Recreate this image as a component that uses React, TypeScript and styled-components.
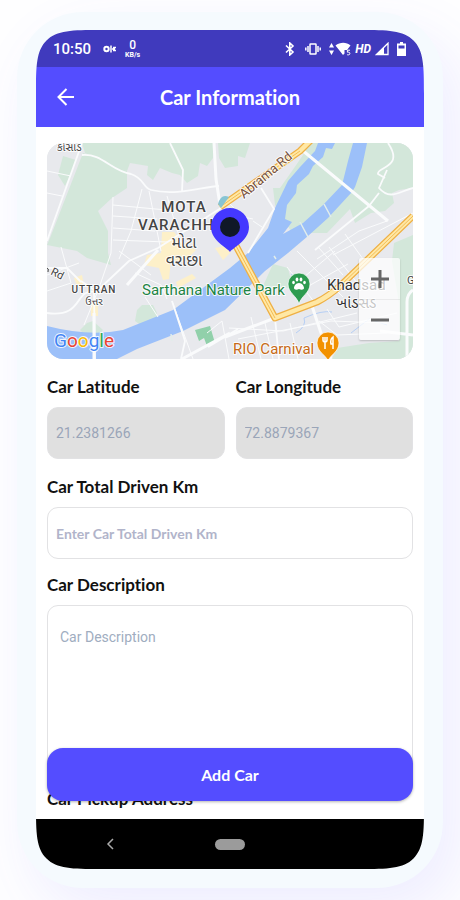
import React from "react";
import styled, { createGlobalStyle } from "styled-components";

const GlobalStyle = createGlobalStyle`
  *, *::before, *::after { box-sizing: border-box; }
  body {
    margin: 0;
    background: #fefeff;
    font-family: Roboto, "Noto Sans", sans-serif;
    font-variant-ligatures: none;
  }
  button, input, textarea { font: inherit; font-variant-ligatures: none; }
`;

const Page = styled.div`
  height: 100vh;
  min-height: 600px;
  padding: 12px 17px;
  display: flex;
  overflow: hidden;
`;

const Bezel = styled.div`
  flex: 1;
  min-width: 0;
  display: flex;
  padding: 18px 19px 19px;
  background: #f5fafe;
  border-radius: 66px;
  box-shadow: 16px 24px 60px rgba(99, 91, 255, 0.1);
`;

const Screen = styled.div`
  flex: 1;
  min-width: 0;
  display: flex;
  flex-direction: column;
  background: #fff;
  overflow: hidden;
  border-radius: 44px;
  @supports (corner-shape: squircle) {
    border-radius: 66px;
    corner-shape: squircle;
  }
`;

const StatusBar = styled.div`
  flex: none;
  height: 37px;
  padding: 0 18px 0 17px;
  display: flex;
  align-items: center;
  justify-content: space-between;
  background: #403abd;
  color: #fff;
`;

const StatusGroup = styled.div<{ $gap: number }>`
  display: flex;
  align-items: center;
  gap: ${(p) => p.$gap}px;
  svg { display: block; }
`;

const Clock = styled.time`
  font-size: 15px;
  font-weight: 500;
  line-height: 20px;
`;

const NetSpeed = styled.div`
  display: flex;
  flex-direction: column;
  align-items: center;
  font-size: 7px;
  font-weight: 700;
  line-height: 8px;
  strong { font-size: 12px; font-weight: 500; line-height: 12px; }
`;

const HdMark = styled.span`
  font-size: 12px;
  line-height: 16px;
  font-weight: 700;
  font-style: italic;
`;

const TitleBar = styled.header`
  flex: none;
  height: 60px;
  padding: 0 16px;
  display: grid;
  grid-template-columns: 28px 1fr 28px;
  align-items: center;
  background: #544dff;
  color: #fff;
`;

const BackButton = styled.button`
  padding: 0;
  border: 0;
  height: 28px;
  background: none;
  color: inherit;
  display: grid;
  place-items: center;
`;

const Title = styled.h1`
  margin: 0;
  text-align: center;
  font: 700 20px/28px Lato, sans-serif;
  font-variant-ligatures: none;
`;

const Main = styled.main`
  position: relative;
  flex: 1;
  min-height: 0;
  display: flex;
  flex-direction: column;
`;

const Form = styled.form`
  flex: 1;
  min-height: 0;
  overflow-y: auto;
  scrollbar-width: none;
  padding: 16px 11px 0;
`;

const MapCard = styled.div`
  position: relative;
  height: 216px;
  border-radius: 16px;
  overflow: hidden;
  background: #e8eaed;
  > svg { display: block; width: 100%; height: 100%; }
`;

const ZoomControl = styled.div`
  position: absolute;
  right: 13px;
  bottom: 19px;
  width: 41px;
  display: flex;
  flex-direction: column;
  background: rgba(255, 255, 255, 0.72);
  border-radius: 2px;
  box-shadow: 0 1px 2px rgba(0, 0, 0, 0.2);
`;

const ZoomButton = styled.button`
  height: 41px;
  padding: 0;
  border: 0;
  background: none;
  color: #666;
  display: grid;
  place-items: center;
  & + & { border-top: 1px solid rgba(0, 0, 0, 0.06); }
`;

const Row = styled.div`
  display: grid;
  grid-template-columns: 1fr 1fr;
  gap: 11px;
`;

const Field = styled.div<{ $gap?: number }>`
  margin-top: ${(p) => p.$gap ?? 16}px;
  display: flex;
  flex-direction: column;
  gap: 8px;
  min-width: 0;
`;

const Label = styled.label`
  font: 700 17px/24px Lato, sans-serif;
  font-variant-ligatures: none;
  color: #111;
`;

const TextInput = styled.input<{ $brand?: boolean }>`
  width: 100%;
  height: 52px;
  padding: 0 8px;
  border: 1px solid #e2e2e4;
  border-radius: 11px;
  background: #fff;
  font: ${(p) => (p.$brand ? "700 14px/20px Lato" : "400 14px/20px Roboto")}, sans-serif;
  color: #9aa5b8;
  outline: none;
  &:disabled { background: #e0e0e0; }
  &::placeholder { color: #b1b4ca; opacity: 1; }
`;

const TextArea = styled.textarea`
  display: block;
  width: 100%;
  height: 168px;
  padding: 21px 12px;
  border: 1px solid #e2e2e4;
  border-radius: 11px;
  resize: none;
  font: 400 14px/20px Roboto, sans-serif;
  outline: none;
  &::placeholder { color: #a0adbf; opacity: 1; }
`;

const AddButton = styled.button`
  position: absolute;
  left: 11px;
  right: 11px;
  bottom: 18px;
  height: 53px;
  border: 0;
  border-radius: 16px;
  background: #544dff;
  color: #fff;
  && { font: 700 16px/20px Lato, sans-serif; }
  box-shadow: 0 1px 3px rgba(0, 0, 0, 0.3);
`;

const NavBar = styled.nav`
  flex: none;
  height: 50px;
  padding: 0 64px;
  display: grid;
  grid-template-columns: 1fr 30px 1fr;
  align-items: center;
  background: #000;
`;

const NavBack = styled.button`
  width: 20px;
  height: 20px;
  padding: 0;
  border: 0;
  background: none;
  display: grid;
  place-items: center;
`;

const NavHome = styled.button`
  height: 11px;
  padding: 0;
  border: 0;
  border-radius: 6px;
  background: #9b9b9b;
`;

const MapText = styled.text<{ $size: number; $color?: string; $weight?: number; $spacing?: number }>`
  font-family: Roboto, "Noto Sans Gujarati", "Noto Sans", sans-serif;
  font-size: ${(p) => p.$size}px;
  font-weight: ${(p) => p.$weight ?? 400};
  font-variant-ligatures: normal;
  letter-spacing: ${(p) => p.$spacing ?? 0}px;
  fill: ${(p) => p.$color ?? "#444"};
  stroke: rgba(255, 255, 255, 0.85);
  stroke-width: 2px;
  stroke-linejoin: round;
  paint-order: stroke;
`;

const greens = [
  "16,13 29,17 25,28 18,43 11,32",
  "36,10 60,18 80,28 80,45 65,55 51,68 61,88 61,110 64,122 40,115 30,108 0,102 3,95",
  "35,0 168,0 166,15 160,23 153,20 151,33 140,40 133,32 125,30 113,25 106,37 100,32 101,23 83,20 80,28 60,20 38,10",
  "171,0 203,0 198,15 191,13 191,23 178,25 172,15",
  "261,0 366,0 366,45 352,47 345,50 347,60 338,68 324,70 308,80 303,66 280,90 245,90 228,62 226,45 233,45 245,28 256,12",
  "366,92 347,100 345,118 352,160 352,198 322,200 290,205 285,216 366,216",
  "226,121 241,125 246,145 216,143",
  "90,167 95,162 106,162 110,170 110,176 95,183 88,178",
  "33,187 40,180 46,178 56,187 52,192 38,192",
];

const thinRoads =
  "M0 28 24 33M0 50 15 53M66 54 64 110 52 145 37 182M66 62 130 68M66 73 110 76M66 85 108 88M66 97 120 99M95 46 84 88 72 116M102 48 114 108M72 108 104 132M120 53 134 100M180 58 196 74 206 76M206 78 215 84M286 112 366 70M270 116 312 88 340 78M282 104 314 145M298 91 316 116M250 108 296 154M240 124 268 160M250 140 288 108M258 145 301 121M272 105 296 132M182 185 236 188 310 170M191 196 284 178 340 180M204 174 214 216M243 180 251 216M218 180 226 216M272 178 290 192 340 190M280 166 292 184 350 170M0 132 32 120M14 104 24 140 0 148M98 154 111 174M125 158 146 216M160 190 175 178 182 216M88 130 114 142 120 156";

const whiteRoads =
  "M35 0 0 98M35 12C55 10 64 28 84 31 97 35 96 45 104 47 130 53 155 44 172 43M123 0 136 27 135 48M341 0C358 25 329 24 331 31L338 35M340 27 332 45C343 58 353 48 366 45M332 50 322 63 268 107M0 125 20 125 34 139M0 170C38 175 26 145 49 149L82 118 111 105 174 65M47 150 48 216M34 138 53 151M214 45 227 66 201 110M125 158 138 198 134 216M161 204 191 186M228 175 232 216";

const KeyIcon = () => (
  <svg width="14" height="8" viewBox="0 0 14 8" fill="none" stroke="#fff">
    <circle cx="3.5" cy="4" r="2.2" strokeWidth="2" />
    <path d="M8 .5v7" strokeWidth="1.5" />
    <path d="M10 2.5h3M10 5.5h3M9 4h3" strokeWidth="1.4" />
  </svg>
);

const BluetoothIcon = () => (
  <svg width="10" height="14" viewBox="0 0 10 14" fill="none" stroke="#fff" strokeWidth="1.6">
    <path d="m1 3.5 7 6.5-3.200 3V1L8 4 1 10.5" />
  </svg>
);

const VibrateIcon = () => (
  <svg width="16" height="12" viewBox="0 0 16 12" fill="none" stroke="#fff" strokeWidth="1.500">
    <rect x="5" y="1" width="6" height="10" rx=".5" />
    <path d="M3 3v6M.8 4.500v3M13 3v6M15.200 4.500v3" />
  </svg>
);

const WifiIcon = () => (
  <svg width="22" height="14" viewBox="0 0 22 14" fill="#fff">
    <path d="m2.500 1 2.500 4.500H0zM2.500 13 5 8.500H0zM6.500 3.500c4.500-3.800 11-3.800 15 0L18 8h-2.500v3.500L14 13z" />
    <path d="M21 8.200h-2.600v2h1.300c1.600 0 1.500 2.600 0 2.600h-1.500" fill="none" stroke="#fff" strokeWidth="1" />
  </svg>
);

const SignalIcon = () => (
  <svg width="14" height="14" viewBox="0 0 14 14">
    <path d="M1.500 12.500 13 1.200v11.300z" fill="none" stroke="#fff" strokeWidth="1.300" />
    <path d="M1 13 9 5v8z" fill="#fff" />
  </svg>
);

const BatteryIcon = () => (
  <svg width="9" height="14" viewBox="0 0 9 14">
    <path d="M3 0h3v1.500h3V14H0V1.500h3z" fill="#fff" />
    <path d="M1.500 3.500h6v3h-6z" fill="#403abd" />
  </svg>
);

const CityMap = () => (
  <svg viewBox="0 0 366 216" preserveAspectRatio="xMidYMid slice" role="img" aria-label="Map">
    <rect width="366" height="216" fill="#e8e9ed" />
    <g fill="#d3e7da">
      {greens.map((points) => <polygon key={points} points={points} />)}
    </g>
    <g fill="#fdf0c9">
      <path d="M115 89h12l8 10 14 8-12 12-13-2-2 19-6 1-4-12-15-3 3-10 14-2zM27 135l8-3 2 10-6 3zM44 158h7v15h-7zM168 105l10-2 6 6-8 8zM129 139l16-8 4 4-18 10z" />
    </g>
    <path fill="#91d0aa" d="m148 187 15-4 5 17-8 3-3-8-5 3z" />
    <path
      fill="#9cc0f9"
      d="M0 183Q43 194 76 187L126 167 183 125 201 110 221 85 228 65 241 38 253 24 268 8 271 0 288 0 285 6 279 5 276 14 266 23 262 31 250 42 249 50 240 62 238 76 245 79 236 91 256 80 276 62 295 42 301 18 306 0 320 0 315 24 308 44 305 49 281 75 261 93 241 110 218 128 178 167 136 188 90 206 70 216 0 216Z"
    />
    <path d="m253 79 8 15M277 61l7 13M229 116l-2-3M125 198l-1-7" stroke="#e2edea" strokeWidth="1.500" fill="none" />
    <path d="M249 190q11-7 8-15 18-8 28-6M304 190l18-14 18 6M244 131q9 3 9 13" stroke="#b6cff5" fill="none" />
    <g fill="none" stroke="#fafbfc" strokeLinejoin="round">
      <path d={thinRoads} strokeWidth="1" />
      <path d={whiteRoads} strokeWidth="1.800" />
      <path d="M167 0 169 36 173 62M255 7 341 78M80 142 111 107M47 170v46M178 194 228 175M135 216 183 190M265 163 274 190 284 216M360 216v-57q0-8 6-12M333 188 366 192" strokeWidth="3" />
    </g>
    <g fill="none" strokeLinejoin="round">
      <path d="M265-4 253 8 173 64M188 101 228 175 270 159Q282 153 293 143L366 73" stroke="#efb044" strokeWidth="7" />
      <path d="M265-4 253 8 173 64M188 101 228 175 270 159Q282 153 293 143L366 73" stroke="#ffe8a5" strokeWidth="4.500" />
      <path d="M253 8 173 64M188 101 228 175M293 143 366 73" stroke="#f2bc58" strokeWidth="1" />
    </g>
    <path d="M171 61q3-11 11-7l-8 11z" fill="#87c4d3" />

    <MapText $size={11} x="10" y="8">કોસાડ</MapText>
    <MapText $size={15} $weight={500} $spacing={1} x="137" y="69" textAnchor="middle">MOTA</MapText>
    <MapText $size={15} $weight={500} $spacing={1} x="91" y="87">VARACHHA</MapText>
    <MapText $size={16} x="137" y="105" textAnchor="middle">મોટા</MapText>
    <MapText $size={16} x="137" y="123" textAnchor="middle">વરાછા</MapText>
    <MapText $size={10} $weight={500} $spacing={1} x="47" y="150" textAnchor="middle">UTTRAN</MapText>
    <MapText $size={10} x="47" y="162" textAnchor="middle">ઉત્તર</MapText>
    <path d="M0 125q2 0 1 4" fill="none" stroke="#444" />
    <MapText $size={11} transform="translate(3 131) rotate(27)">Rd</MapText>
    <MapText $size={13} $color="#77513b" transform="translate(197 56) rotate(-40)">Abrama Rd</MapText>
    <MapText $size={15} $color="#1d8444" x="95" y="152">Sarthana Nature Park</MapText>
    <MapText $size={15} $color="#333" x="280" y="147">Khadsad</MapText>
    <MapText $size={15} $color="#333" x="289" y="165">ખાંડસડ</MapText>
    <MapText $size={11} x="360" y="141">G</MapText>
    <MapText $size={15} $color="#c76a16" x="186" y="211">RIO Carnival</MapText>

    <path d="M252 161c-2-8-11-11-11-20a11 11 0 0 1 22 0c0 9-9 12-11 20z" fill="#2d9b50" stroke="#fff" strokeWidth=".7" />
    <g fill="#fff">
      <path d="M252 140c-3 0-5 3-5 5s3 2 5 1c2 1 5 1 5-1s-2-5-5-5z" />
      <ellipse cx="246.500" cy="139.500" rx="1.300" ry="1.800" />
      <ellipse cx="250" cy="136.500" rx="1.400" ry="2" />
      <ellipse cx="254" cy="136.500" rx="1.400" ry="2" />
      <ellipse cx="257.500" cy="139.500" rx="1.300" ry="1.800" />
    </g>
    <path d="M281 218c-2-6-11-9-11-18a11 11 0 0 1 22 0c0 9-9 12-11 18z" fill="#f29100" stroke="#fff" strokeWidth=".7" />
    <path d="M276 194v3q0 2 2 2t2-2v-3M278 194v12M286 206v-12q-3 2-2 7h2" fill="none" stroke="#fff" strokeWidth="1.500" />

    <path d="M183 109c-2-4-19-11-19-25a19 19 0 0 1 38 0c0 14-17 21-19 25z" fill="#4438ff" />
    <circle cx="183" cy="84" r="10" fill="#101828" />

    <MapText $size={19} x="7" y="204">
      <tspan fill="#4285f4">G</tspan>
      <tspan fill="#ea4335">o</tspan>
      <tspan fill="#fbbc05">o</tspan>
      <tspan fill="#4285f4">g</tspan>
      <tspan fill="#34a853">l</tspan>
      <tspan fill="#ea4335">e</tspan>
    </MapText>
  </svg>
);

export default function App() {
  return (
    <>
      <GlobalStyle />
      <Page>
        <Bezel>
          <Screen>
            <StatusBar>
              <StatusGroup $gap={12}>
                <Clock>10:50</Clock>
                <StatusGroup $gap={8}>
                  <KeyIcon />
                  <NetSpeed><strong>0</strong>KB/s</NetSpeed>
                </StatusGroup>
              </StatusGroup>
              <StatusGroup $gap={8}>
                <StatusGroup $gap={10}><BluetoothIcon /><VibrateIcon /></StatusGroup>
                <StatusGroup $gap={4}><WifiIcon /><HdMark>HD</HdMark><SignalIcon /></StatusGroup>
                <BatteryIcon />
              </StatusGroup>
            </StatusBar>
            <TitleBar>
              <BackButton type="button" aria-label="Back">
                <svg width="18" height="18" viewBox="0 0 18 18" fill="none" stroke="currentColor" strokeWidth="2">
                  <path d="M17 9H2M9.500 1 1.500 9l8 8" />
                </svg>
              </BackButton>
              <Title>Car Information</Title>
            </TitleBar>
            <Main>
              <Form id="car-form" onSubmit={(e) => e.preventDefault()}>
                <MapCard>
                  <CityMap />
                  <ZoomControl>
                    <ZoomButton type="button" aria-label="Zoom in">
                      <svg width="20" height="20" viewBox="0 0 20 20" stroke="currentColor" strokeWidth="3"><path d="M1 10h18M10 1v18" /></svg>
                    </ZoomButton>
                    <ZoomButton type="button" aria-label="Zoom out">
                      <svg width="20" height="20" viewBox="0 0 20 20" stroke="currentColor" strokeWidth="3"><path d="M1 10h18" /></svg>
                    </ZoomButton>
                  </ZoomControl>
                </MapCard>
                <Row>
                  <Field>
                    <Label htmlFor="latitude">Car Latitude</Label>
                    <TextInput id="latitude" defaultValue="21.2381266" disabled />
                  </Field>
                  <Field>
                    <Label htmlFor="longitude">Car Longitude</Label>
                    <TextInput id="longitude" defaultValue="72.8879367" disabled />
                  </Field>
                </Row>
                <Field>
                  <Label htmlFor="driven">Car Total Driven Km</Label>
                  <TextInput id="driven" $brand placeholder="Enter Car Total Driven Km" />
                </Field>
                <Field $gap={14}>
                  <Label htmlFor="description">Car Description</Label>
                  <TextArea id="description" placeholder="Car Description" />
                </Field>
                <Field $gap={14}>
                  <Label htmlFor="pickup">Car Pickup Address</Label>
                  <TextInput id="pickup" />
                </Field>
              </Form>
              <AddButton type="submit" form="car-form">Add Car</AddButton>
            </Main>
            <NavBar>
              <NavBack type="button" aria-label="System back">
                <svg width="8" height="12" viewBox="0 0 8 12" fill="none" stroke="#aaa" strokeWidth="1.500"><path d="M7 1 2 6l5 5" /></svg>
              </NavBack>
              <NavHome type="button" aria-label="Home" />
            </NavBar>
          </Screen>
        </Bezel>
      </Page>
    </>
  );
}
